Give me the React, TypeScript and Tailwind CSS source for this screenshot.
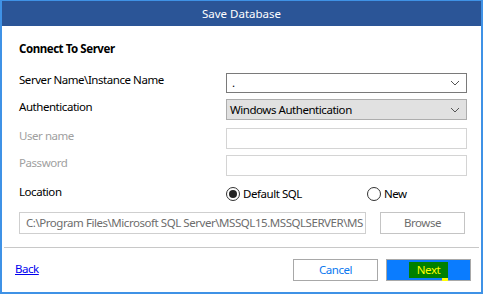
const Chevron = () => (
  <svg width="10" height="6" viewBox="0 0 10 6" className="mr-[6px]">
    <path d="M1 1 L5 5 L9 1" fill="none" stroke="#555" strokeWidth="1" />
  </svg>
)

const Radio = ({ checked, label }: { checked?: boolean; label: string }) => (
  <div className="flex items-center gap-[3px]">
    <div className="w-[14px] h-[14px] rounded-full border border-[#333] flex items-center justify-center bg-white">
      {checked && <div className="w-[8px] h-[8px] rounded-full bg-[#222]" />}
    </div>
    <span className="text-black">{label}</span>
  </div>
)

export default function App() {
  return (
    <div className="w-[485px] h-[297px] bg-white text-[11.5px] leading-[16px] tracking-[-0.45px] font-['Noto_Sans',sans-serif]">
      <div className="w-[483px] h-[294px] border-x-2 border-b-2 border-t border-[#3f92e6] flex flex-col">
        <div className="h-[25px] bg-[#2b5597] text-white flex items-center justify-center shrink-0 tracking-normal">
          Save Database
        </div>
        <div className="flex-1 flex flex-col pl-[17px] pr-[14px]">
          <div className="mt-[15px] font-bold text-black h-[16px] leading-[16px]">Connect To Server</div>

          <div className="mt-[16px] flex items-center h-[20px]">
            <span className="w-[207px] text-black -mt-[6px]">Server Name\Instance Name</span>
            <div className="flex-1 h-[20px] border border-[#7a7a7a] flex items-center justify-between">
              <span className="pl-[5px] leading-[12px]">.</span>
              <Chevron />
            </div>
          </div>

          <div className="mt-[6px] flex items-center h-[21px]">
            <span className="w-[207px] text-black -mt-[6px]">Authentication</span>
            <div className="flex-1 h-[21px] border border-[#adadad] bg-[#e1e1e1] flex items-center justify-between">
              <span className="pl-[3px] text-black">Windows Authentication</span>
              <Chevron />
            </div>
          </div>

          <div className="mt-[8px] flex items-center h-[21px]">
            <span className="w-[207px] text-[#a0a0a0] -mt-[5px]">User name</span>
            <div className="flex-1 h-[21px] border border-[#d4d4d4] bg-white" />
          </div>

          <div className="mt-[6px] flex items-center h-[21px]">
            <span className="w-[207px] text-[#a0a0a0] -mt-[5px]">Password</span>
            <div className="flex-1 h-[21px] border border-[#d4d4d4] bg-white" />
          </div>

          <div className="mt-[10px] flex items-center h-[16px]">
            <span className="w-[207px] text-black -mt-[4px]">Location</span>
            <div className="w-[141px]">
              <Radio checked label="Default SQL" />
            </div>
            <Radio label="New" />
          </div>

          <div className="mt-[10px] flex items-center h-[22px]">
            <div className="w-[347px] h-[22px] border border-[#cfcfcf] text-[#6d6d6d] flex items-center pl-[6px] overflow-hidden whitespace-nowrap">
              C:\Program Files\Microsoft SQL Server\MSSQL15.MSSQLSERVER\MS
            </div>
            <div className="ml-[14px] w-[85px] h-[22px] border border-[#c4c4c4] text-[#6d6d6d] flex items-center justify-center">
              Browse
            </div>
          </div>
        </div>
        <div className="mx-[2px] border-t border-[#c8c8c8] h-0" />
        <div className="h-[44px] flex items-center pl-[13px] pr-[10px] shrink-0">
          <span className="text-[#0000ee] underline -mt-[3px]">Back</span>
          <div className="flex-1" />
          <div className="w-[85px] h-[22px] border border-[#a8a8a8] text-[#0a78f0] flex items-center justify-center bg-white">
            Cancel
          </div>
          <div className="ml-[8px] w-[85px] h-[22px] border border-[#a8a8a8] bg-[#0a7cff] flex items-center justify-center">
            <span className="relative bg-[#008000] text-[#ffff00] px-[8px] leading-[16px]">
              Next
              <span className="absolute right-[0px] -bottom-[3px] w-[6px] h-[3px] bg-[#ffff00]" />
            </span>
          </div>
        </div>
      </div>
    </div>
  )
}
